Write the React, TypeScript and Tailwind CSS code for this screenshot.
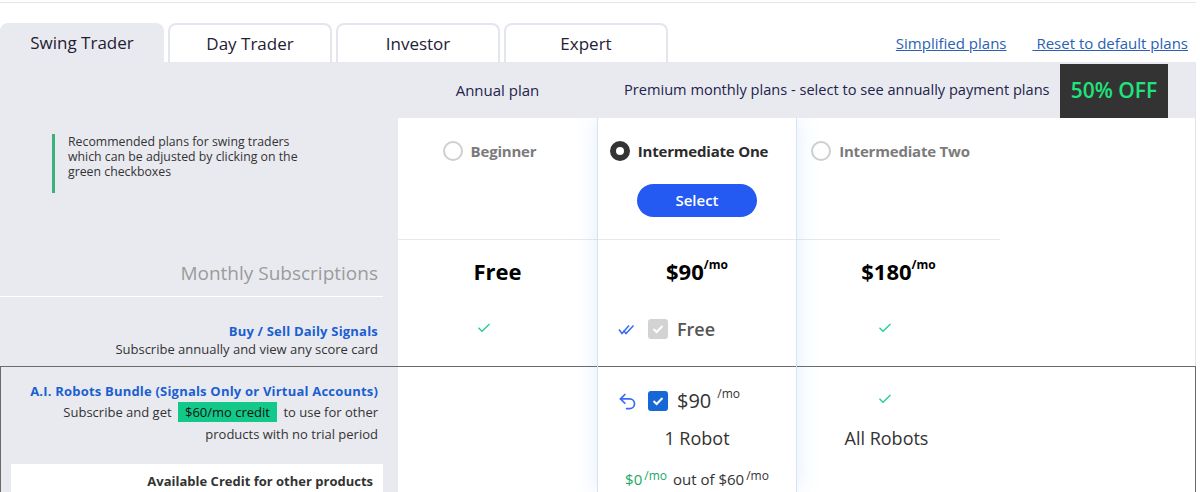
import React from "react";
import { Undo2 } from "lucide-react";

function Check({ className = "" }: { className?: string }) {
  return (
    <svg width="14" height="10" viewBox="0 0 14 10" className={className}>
      <path d="M1.5 4.8 L5 8.3 L12.5 1" fill="none" stroke="#22d18b" strokeWidth="1.4" />
    </svg>
  );
}

function DoubleCheck() {
  return (
    <svg width="19" height="11" viewBox="0 0 19 11">
      <path d="M1 5.5 L4 9.5 L11 1.5" fill="none" stroke="#3a6cf0" strokeWidth="1.5" />
      <path d="M5.5 6.5 L8 9.5 L15.5 1.5" fill="none" stroke="#3a6cf0" strokeWidth="1.5" />
    </svg>
  );
}

function BoxCheck({ bg }: { bg: string }) {
  return (
    <div className={`w-[20px] h-[20px] rounded-[3px] flex items-center justify-center ${bg}`}>
      <svg width="12" height="10" viewBox="0 0 12 10">
        <path d="M1.5 5 L4.6 8 L10.5 2" fill="none" stroke="#ffffff" strokeWidth="2" />
      </svg>
    </div>
  );
}

function Radio({ checked, label }: { checked: boolean; label: string }) {
  return (
    <div className="flex items-center gap-[8px] pr-[16px]">
      {checked ? (
        <div className="w-[20px] h-[20px] rounded-full border-[6px] border-[#333333] bg-white" />
      ) : (
        <div className="w-[20px] h-[20px] rounded-full border-2 border-[#cfcfcf] bg-white" />
      )}
      <span className={`text-[15px] font-bold tracking-[-0.2px] ${checked ? "text-[#2b2b2b]" : "text-[#7b7b7b]"}`}>{label}</span>
    </div>
  );
}

function Price({ v }: { v: string }) {
  return (
    <div className="flex items-start font-bold text-black">
      <span className="text-[22px] leading-[28px]">{v}</span>
      <span className="text-[12px] leading-[14px] mt-[1px]">/mo</span>
    </div>
  );
}

export default function App() {
  return (
    <div className="w-[1200px] h-[492px] overflow-hidden bg-white font-['Open_Sans',sans-serif] text-[#222]">
      <div className="w-[1196px] mt-[2px] border-t border-[#e6e7ee]">
        {/* tabs row */}
        <div className="flex mt-[20px] h-[39px]">
          <div className="flex gap-[4px] h-full">
            <div className="w-[164px] h-full rounded-t-[8px] bg-[#e9eaf0] flex items-center justify-center text-[17px] text-[#1f2033]">
              Swing Trader
            </div>
            {["Day Trader", "Investor", "Expert"].map((t) => (
              <div
                key={t}
                className="w-[164px] h-full rounded-t-[8px] bg-white border-2 border-b-0 border-[#e4e6ee] flex items-center justify-center text-[17px] text-[#1f2033]"
              >
                {t}
              </div>
            ))}
          </div>
          <div className="ml-auto flex items-center gap-[26px] pr-[8px] pt-[1px] text-[15px] text-[#2b5fb4]">
            <span className="underline">Simplified plans</span>
            <span className="underline whitespace-pre"> Reset to default plans</span>
          </div>
        </div>

        {/* header row */}
        <div className="relative z-10 h-[56px] bg-[#e9eaf0] flex items-center text-[15px] text-[#23234a] border-r border-[#e3e5ea]">
          <div className="w-[398px] shrink-0" />
          <div className="w-[199px] shrink-0 text-center">Annual plan</div>
          <div className="ml-[27px] whitespace-nowrap text-[14.6px]">Premium monthly plans - select to see annually payment plans</div>
          <div className="ml-auto mr-[27px] self-end shrink-0 w-[108px] h-[54px] bg-[#333333] flex items-center justify-center text-[21px] font-semibold text-[#1fe37c]">
            50% OFF
          </div>
        </div>

        {/* body */}
        <div className="flex h-[374px]">
          {/* left column */}
          <div className="w-[398px] shrink-0 bg-[#e9eaf0] flex flex-col">
            <div className="h-[122px] shrink-0 pl-[52px] pt-[16px]">
              <div className="border-l-[3px] border-[#3bb17e] pl-[13px] pb-[14px] text-[12.3px] leading-[15px] text-[#333]">
                Recommended plans for swing traders
                <br />
                which can be adjusted by clicking on the
                <br />
                green checkboxes
              </div>
            </div>
            <div className="h-[57px] shrink-0 mr-[15px] border-b border-white pt-[10px] pr-[5px] flex items-center justify-end text-[19px] text-[#9b9b9b]">
              Monthly Subscriptions
            </div>
            <div className="h-[69px] shrink-0 pt-[25px] pr-[20px] text-right text-[13px] leading-[18px]">
              <div className="font-bold text-[#1a5fd0] tracking-[0.2px]">Buy / Sell Daily Signals</div>
              <div className="text-[#333]">Subscribe annually and view any score card</div>
            </div>
            <div className="flex-1 min-h-0 overflow-hidden border-t border-l border-[#6b6b6b] pt-[14px] text-[13px] text-right">
              <div className="pr-[20px] leading-[20px] font-bold text-[#1a5fd0] tracking-[0.2px]">
                A.I. Robots Bundle (Signals Only or Virtual Accounts)
              </div>
              <div className="pr-[20px] leading-[22px] text-[#333]">
                Subscribe and get{" "}
                <span className="inline-block bg-[#12c98a] text-[#111] px-[7px] leading-[20px] mx-[3px]">$60/mo credit</span>{" "}
                to use for other
                <br />
                products with no trial period
              </div>
              <div className="ml-[10px] mr-[15px] mt-[19px] bg-white h-[40px] pt-[8px] pr-[10px] font-bold text-[#333]">
                Available Credit for other products
              </div>
            </div>
          </div>

          {/* beginner */}
          <div className="w-[199px] shrink-0 bg-white flex flex-col">
            <div className="h-[122px] shrink-0 border-b border-[#e7e8ee] flex flex-col items-center pt-[22px]">
              <Radio checked={false} label="Beginner" />
            </div>
            <div className="h-[57px] shrink-0 flex items-center justify-center pt-[5px] text-[22px] font-bold text-black">Free</div>
            <div className="h-[69px] shrink-0 flex justify-center pt-[26px] pr-[28px]">
              <Check />
            </div>
            <div className="flex-1 border-t border-[#6b6b6b]" />
          </div>

          {/* intermediate one */}
          <div className="relative z-0 w-[200px] shrink-0 bg-white border-x border-[#d5e3f7] shadow-[0_0_22px_rgba(80,140,240,0.16)] flex flex-col">
            <div className="h-[122px] shrink-0 border-b border-[#e7e8ee] flex flex-col items-center pt-[22px]">
              <Radio checked={true} label="Intermediate One" />
              <div className="mt-[21px] w-[120px] h-[33px] rounded-full bg-[#2459f2] text-white text-[15px] font-semibold flex items-center justify-center">
                Select
              </div>
            </div>
            <div className="h-[57px] shrink-0 flex items-center justify-center pt-[5px]">
              <Price v="$90" />
            </div>
            <div className="h-[69px] shrink-0 flex items-start pt-[22px] pl-[20px]">
              <div className="flex items-center h-[20px]">
                <DoubleCheck />
                <div className="ml-[11px]">
                  <BoxCheck bg="bg-[#d3d3d3]" />
                </div>
                <span className="ml-[9px] text-[18px] font-semibold text-[#555]">Free</span>
              </div>
            </div>
            <div className="flex-1 border-t border-[#6b6b6b] flex flex-col">
              <div className="flex items-center h-[20px] mt-[24px] pl-[19px]">
                <Undo2 size={21} color="#3a6cf0" strokeWidth={2} />
                <div className="ml-[10px]">
                  <BoxCheck bg="bg-[#1767d6]" />
                </div>
                <span className="ml-[9px] text-[20px] leading-[20px] font-medium text-[#333]">$90</span>
                <span className="ml-[6px] self-start -mt-[6px] text-[12px] text-[#333]">/mo</span>
              </div>
              <div className="mt-[15px] text-center text-[18px] leading-[24px] text-[#333]">1 Robot</div>
              <div className="mt-[19px] flex justify-center items-start text-[15px] leading-[20px] text-[#333]">
                <span className="text-[#1aa864]">$0</span>
                <span className="text-[12px] leading-[14px] text-[#1aa864] ml-[2px]">/mo</span>
                <span className="ml-[6px]">out of $60</span>
                <span className="text-[12px] leading-[14px] ml-[2px]">/mo</span>
              </div>
            </div>
          </div>

          {/* intermediate two */}
          <div className="w-[203px] shrink-0 bg-white flex flex-col">
            <div className="h-[122px] shrink-0 border-b border-[#e7e8ee] flex flex-col items-center pt-[22px]">
              <Radio checked={false} label="Intermediate Two" />
            </div>
            <div className="h-[57px] shrink-0 flex items-center justify-center pt-[5px]">
              <Price v="$180" />
            </div>
            <div className="h-[69px] shrink-0 flex justify-center pt-[26px] pr-[28px]">
              <Check />
            </div>
            <div className="flex-1 border-t border-[#6b6b6b] flex flex-col items-center">
              <div className="mt-[27px] pr-[28px]">
                <Check />
              </div>
              <div className="mt-[22px] pr-[24px] text-[18px] leading-[24px] text-[#333]">All Robots</div>
            </div>
          </div>

          {/* filler */}
          <div className="flex-1 bg-white flex flex-col">
            <div className="h-[248px] shrink-0 border-r border-[#e3e5ea]" />
            <div className="flex-1 border-t border-r border-[#6b6b6b]" />
          </div>
        </div>
      </div>
    </div>
  );
}
